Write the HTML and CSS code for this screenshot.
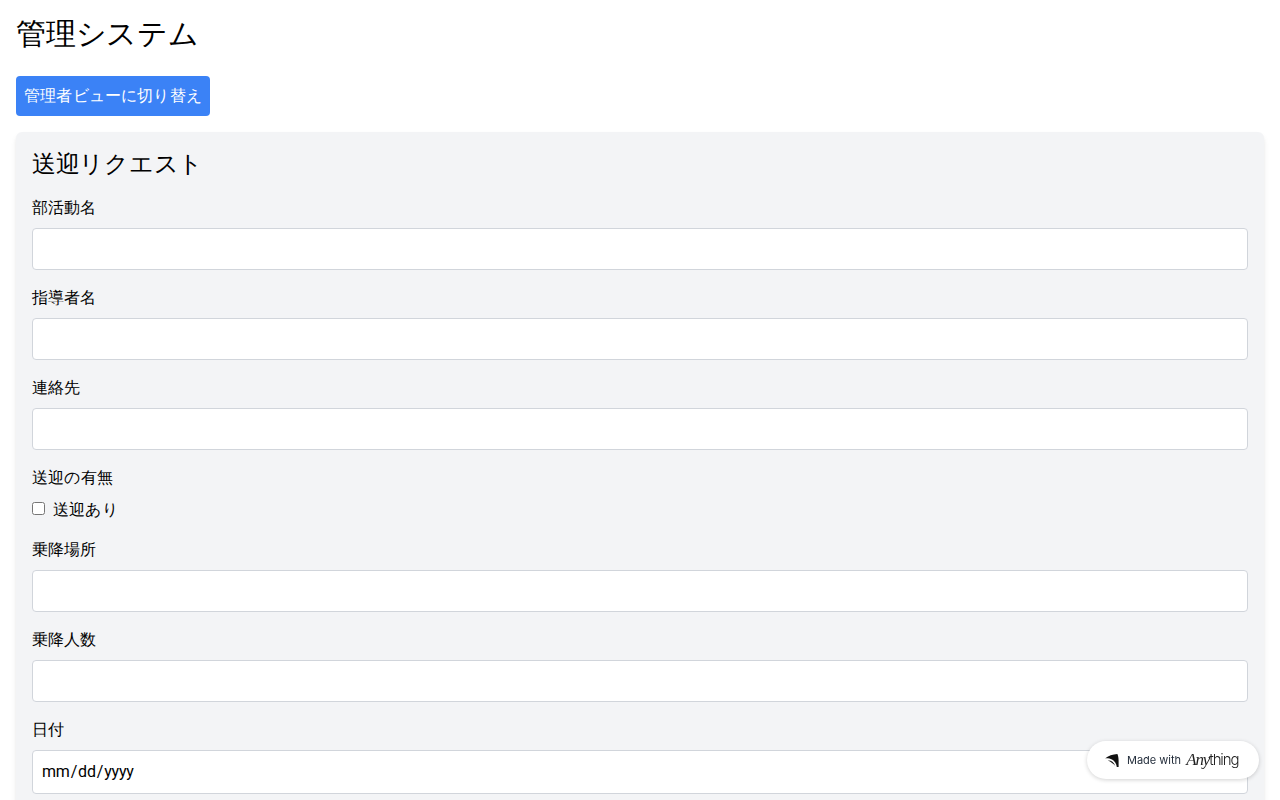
FILE: index.html
```html
<!DOCTYPE html>
<html>
<head>
  <meta charset="utf-8">
  <title>管理システム</title>
  <link rel="stylesheet" href="styles.css">
</head>
<body>

<div class="page">
  <h1>管理システム</h1>
  <button class="switch-view">管理者ビューに切り替え</button>

  <form class="panel">
    <h2>送迎リクエスト</h2>

    <div class="field">
      <label>部活動名</label>
      <input type="text">
    </div>
    <div class="field">
      <label>指導者名</label>
      <input type="text">
    </div>
    <div class="field">
      <label>連絡先</label>
      <input type="text">
    </div>
    <div class="field">
      <label class="kana-label">送迎の有無</label>
      <div class="check-row">
        <input type="checkbox" id="pickup">
        <label class="kana-label" for="pickup">送迎あり</label>
      </div>
    </div>
    <div class="field">
      <label>乗降場所</label>
      <input type="text">
    </div>
    <div class="field">
      <label>乗降人数</label>
      <input type="number">
    </div>
    <div class="field">
      <label>日付</label>
      <input type="date">
    </div>
  </form>
</div>

<a class="made-with">
  <svg class="made-icon" width="14" height="13" viewBox="0 0 14 13">
    <path d="M0 4.4 C3 1.8 8 0.4 12.4 0 C13.2 2 13.6 4 13.6 6.4 L13.6 13 L11.8 13 C11.4 9.6 9.6 7 7 5.6 C5 4.6 2.4 4 0 4.4 Z" fill="#111"/>
    <path d="M2.8 6.6 C5.8 6.2 8.8 8 10.2 11.8 C8.4 9.8 6 8 2.8 6.6 Z" fill="#111"/>
  </svg>
  <span class="made-text">Made with</span>
  <span class="made-logo"><em>Any</em>thing</span>
</a>

</body>
</html>
```

FILE: styles.css
```css
* {
  box-sizing: border-box;
}

html, body {
  height: 800px;
  overflow: hidden;
}

body {
  margin: 0;
  background: #fff;
  color: #000;
  font-family: Roboto, sans-serif;
  font-size: 16px;
  line-height: 24px;
}

.page {
  padding: 16px;
}

h1 {
  margin: 0 0 24px;
  font-size: 30px;
  line-height: 36px;
  font-weight: 400;
  letter-spacing: -0.17px;
}

h2 {
  margin: 0 0 16px;
  font-size: 24px;
  line-height: 32px;
  font-weight: 400;
  letter-spacing: -0.28px;
}

.switch-view {
  display: block;
  height: 40px;
  padding: 8px;
  margin-bottom: 16px;
  border: none;
  border-radius: 4px;
  background: #3b82f6;
  color: #fff;
  font: inherit;
  letter-spacing: 0.18px;
}

.panel {
  padding: 16px;
  border-radius: 6px;
  background: #f3f4f6;
  box-shadow: 0 4px 6px -1px rgba(0, 0, 0, 0.1), 0 2px 4px -2px rgba(0, 0, 0, 0.1);
}

.field {
  margin-bottom: 16px;
}

.field > label {
  display: block;
  margin-bottom: 8px;
}

.kana-label {
  letter-spacing: 0.22px;
}

.field > input {
  display: block;
  width: 100%;
  padding: 8px;
  border: 1px solid #d1d5db;
  border-radius: 4px;
  background: #fff;
  font: inherit;
  color: #000;
}

.field > input[type="text"],
.field > input[type="number"] {
  height: 42px;
}

.field > input[type="date"] {
  height: 44px;
  letter-spacing: -0.2px;
}

.check-row {
  display: flex;
  align-items: center;
  height: 24px;
}

.check-row input {
  width: 13px;
  height: 13px;
  margin: 0 8px 4px 0;
}

.made-with {
  position: fixed;
  right: 21px;
  bottom: 21px;
  display: flex;
  align-items: center;
  width: 172px;
  height: 38px;
  padding-left: 18px;
  border-radius: 19px;
  background: #fff;
  box-shadow: 0 1px 4px rgba(0, 0, 0, 0.18);
  color: #1f2937;
  font-family: Inter, sans-serif;
}

.made-icon {
  margin-right: 8px;
}

.made-text {
  font-size: 11px;
  margin-right: 5px;
}

.made-logo {
  font-size: 15px;
  font-weight: 300;
  letter-spacing: -1.1px;
  color: #222;
}

.made-logo em {
  font-family: "Liberation Serif", serif;
  font-size: 17px;
  font-style: italic;
}
```
